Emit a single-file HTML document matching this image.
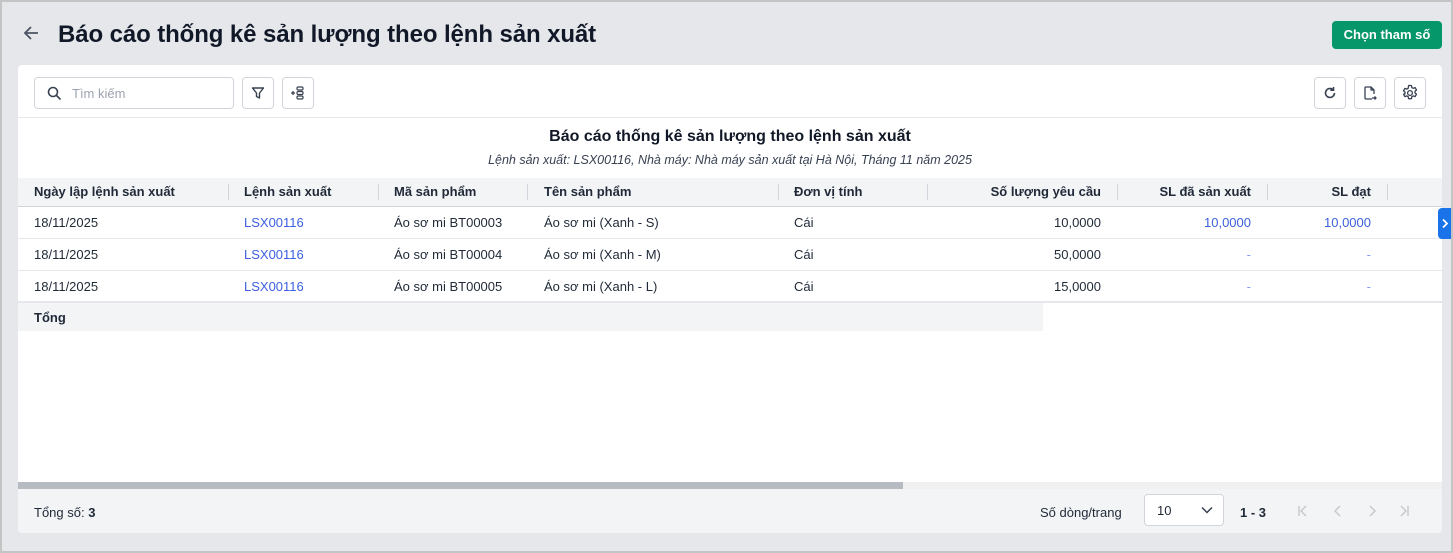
<!DOCTYPE html>
<html><head><meta charset="utf-8"><style>
*{box-sizing:border-box;margin:0;padding:0}
body{width:1453px;height:553px;overflow:hidden;background:#e5e7eb;font-family:"Liberation Sans",sans-serif;color:#1f2937;position:relative;font-size:13px}
.frame{position:absolute;left:0;top:0;width:1453px;height:553px;border:2px solid #c4c4c4}
.a{position:absolute}
.card{position:absolute;left:18px;top:65px;width:1424px;height:468px;background:#fff;border-radius:4px;overflow:hidden}
.btn{position:absolute;width:32px;height:32px;border:1px solid #d1d5db;border-radius:4px;background:#fff;display:flex;align-items:center;justify-content:center}
.row{position:absolute;left:0;width:1424px;height:32px;border-bottom:1px solid #e5e7eb}
.c{position:absolute;top:0;line-height:31px;white-space:nowrap}
.r{text-align:right}
.lnk{color:#3b5fe0}
.hd{font-weight:bold;color:#1f2937}
.sep{position:absolute;top:6px;width:1px;height:16px;background:#d1d5db}
</style></head><body>
<svg class="a" style="left:22px;top:24px" width="18" height="18" viewBox="0 0 18 18"><path d="M16 9H3M9 3L3 9l6 6" stroke="#4b5563" stroke-width="1.8" fill="none"/></svg>
<div class="a" style="left:58px;top:20px;font-size:24px;font-weight:bold;color:#111827;line-height:30px;letter-spacing:-0.1px">Báo cáo thống kê sản lượng theo lệnh sản xuất</div>
<div class="a" style="left:1332px;top:21px;width:110px;height:28px;background:#059669;border-radius:4px;color:#fff;font-weight:bold;font-size:13px;line-height:28px;text-align:center">Chọn tham số</div>

<div class="card">
 <div class="a" style="left:16px;top:12px;width:200px;height:32px;border:1px solid #d1d5db;border-radius:4px">
  <svg class="a" style="left:12px;top:8px" width="15" height="15" viewBox="0 0 15 15"><circle cx="6" cy="6" r="4.5" stroke="#374151" stroke-width="1.6" fill="none"/><path d="M9.5 9.5L13.5 13.5" stroke="#374151" stroke-width="1.6"/></svg>
  <span class="a" style="left:37px;top:8px;color:#9ca3af;font-size:13px">Tìm kiếm</span>
 </div>
 <div class="btn" style="left:224px;top:12px"><svg width="14" height="14" viewBox="0 0 14 14"><path d="M1.5 2h11L8.5 7v5l-3-1.5V7z" stroke="#374151" stroke-width="1.4" fill="none" stroke-linejoin="round"/></svg></div>
 <div class="btn" style="left:264px;top:12px"><svg width="16" height="16" viewBox="0 0 16 16"><path d="M1 8h4M3 6v4" stroke="#374151" stroke-width="1.3"/><rect x="7" y="2" width="6" height="3" rx="1.2" stroke="#374151" stroke-width="1.2" fill="none"/><rect x="7" y="6.5" width="6" height="3" rx="1.2" stroke="#374151" stroke-width="1.2" fill="none"/><rect x="7" y="11" width="6" height="3" rx="1.2" stroke="#374151" stroke-width="1.2" fill="none"/></svg></div>
 <div class="btn" style="left:1296px;top:12px"><svg width="14" height="14" viewBox="0 0 14 14"><path d="M11.5 7A4.5 4.5 0 1 1 10 3.6" stroke="#374151" stroke-width="1.6" fill="none"/><path d="M10.5 1v3.2H7.3" stroke="#374151" stroke-width="1.6" fill="none"/></svg></div>
 <div class="btn" style="left:1336px;top:12px"><svg width="16" height="16" viewBox="0 0 16 16"><path d="M10 14H4a1 1 0 0 1-1-1V3a1 1 0 0 1 1-1h5l3 3v4M9 2v3h3M10 13h4M12.5 11.5L14 13l-1.5 1.5" stroke="#374151" stroke-width="1.3" fill="none" stroke-linejoin="round"/></svg></div>
 <div class="btn" style="left:1376px;top:12px"><svg width="18" height="18" viewBox="0 0 18 18"><path d="M7.6 1.5h2.8l.4 2 1.4.8 1.9-.7 1.4 2.4-1.5 1.3v1.6l1.5 1.3-1.4 2.4-1.9-.7-1.4.8-.4 2H7.6l-.4-2-1.4-.8-1.9.7-1.4-2.4L4 9.7V8.1L2.5 6.8l1.4-2.4 1.9.7 1.4-.8z" stroke="#374151" stroke-width="1.3" fill="none" stroke-linejoin="round"/><circle cx="9" cy="9" r="2.4" stroke="#374151" stroke-width="1.3" fill="none"/></svg></div>
 <div class="a" style="left:0;top:52px;width:1424px;height:1px;background:#e5e7eb"></div>
 <div class="a" style="left:0;top:63px;width:1424px;text-align:center;font-size:16px;font-weight:bold;color:#111827">Báo cáo thống kê sản lượng theo lệnh sản xuất</div>
 <div class="a" style="left:0;top:88px;width:1424px;text-align:center;font-size:12.5px;font-style:italic;color:#374151">Lệnh sản xuất: LSX00116, Nhà máy: Nhà máy sản xuất tại Hà Nội, Tháng 11 năm 2025</div>

 <div class="row" style="top:113px;height:29px;background:#f3f4f6;border-bottom:1px solid #d1d5db">
  <span class="c hd" style="left:16px;line-height:28px">Ngày lập lệnh sản xuất</span>
  <span class="c hd" style="left:226px;line-height:28px">Lệnh sản xuất</span>
  <span class="c hd" style="left:376px;line-height:28px">Mã sản phẩm</span>
  <span class="c hd" style="left:526px;line-height:28px">Tên sản phẩm</span>
  <span class="c hd" style="left:776px;line-height:28px">Đơn vị tính</span>
  <span class="c hd r" style="left:900px;width:183px;line-height:28px">Số lượng yêu cầu</span>
  <span class="c hd r" style="left:1100px;width:133px;line-height:28px">SL đã sản xuất</span>
  <span class="c hd r" style="left:1250px;width:103px;line-height:28px">SL đạt</span>
  <div class="sep" style="left:210px"></div><div class="sep" style="left:360px"></div><div class="sep" style="left:509px"></div><div class="sep" style="left:760px"></div><div class="sep" style="left:909px"></div><div class="sep" style="left:1099px"></div><div class="sep" style="left:1249px"></div><div class="sep" style="left:1369px"></div>
 </div>
 <div class="row" style="top:142px"><span class="c" style="left:16px">18/11/2025</span><span class="c lnk" style="left:226px">LSX00116</span><span class="c" style="left:376px">Áo sơ mi BT00003</span><span class="c" style="left:526px">Áo sơ mi (Xanh - S)</span><span class="c" style="left:776px">Cái</span><span class="c r" style="left:900px;width:183px">10,0000</span><span class="c r lnk" style="left:1100px;width:133px">10,0000</span><span class="c r lnk" style="left:1250px;width:103px">10,0000</span></div>
 <div class="row" style="top:174px"><span class="c" style="left:16px">18/11/2025</span><span class="c lnk" style="left:226px">LSX00116</span><span class="c" style="left:376px">Áo sơ mi BT00004</span><span class="c" style="left:526px">Áo sơ mi (Xanh - M)</span><span class="c" style="left:776px">Cái</span><span class="c r" style="left:900px;width:183px">50,0000</span><span class="c r lnk" style="left:1100px;width:133px;color:#8b9cf0">-</span><span class="c r lnk" style="left:1250px;width:103px;color:#8b9cf0">-</span></div>
 <div class="row" style="top:206px;border-bottom:2px solid #e5e7eb"><span class="c" style="left:16px">18/11/2025</span><span class="c lnk" style="left:226px">LSX00116</span><span class="c" style="left:376px">Áo sơ mi BT00005</span><span class="c" style="left:526px">Áo sơ mi (Xanh - L)</span><span class="c" style="left:776px">Cái</span><span class="c r" style="left:900px;width:183px">15,0000</span><span class="c r lnk" style="left:1100px;width:133px;color:#8b9cf0">-</span><span class="c r lnk" style="left:1250px;width:103px;color:#8b9cf0">-</span></div>
 <div class="a" style="left:0;top:238px;width:1025px;height:28px;background:#f3f4f6"><span class="c hd" style="left:16px;line-height:30px">Tổng</span></div>

 <div class="a" style="left:0;top:417px;width:1424px;height:7px;background:#f0f0f0"></div>
 <div class="a" style="left:0;top:417px;width:885px;height:7px;background:#b6bac1"></div>
 <div class="a" style="left:0;top:424px;width:1424px;height:44px;background:#f3f4f6">
  <span class="a" style="left:16px;top:16px">Tổng số: <b>3</b></span>
  <span class="a" style="left:1022px;top:16px">Số dòng/trang</span>
  <div class="a" style="left:1126px;top:5px;width:80px;height:32px;background:#fff;border:1px solid #d1d5db;border-radius:4px"><span class="a" style="left:12px;top:8px">10</span><svg class="a" style="left:56px;top:11px" width="12" height="8" viewBox="0 0 12 8"><path d="M1 1.5l5 5 5-5" stroke="#374151" stroke-width="1.5" fill="none"/></svg></div>
  <span class="a" style="left:1222px;top:16px;font-weight:bold">1 - 3</span>
  <svg class="a" style="left:1276px;top:15px" width="120" height="14" viewBox="0 0 120 14"><g stroke="#c4c7cc" stroke-width="1.4" fill="none"><path d="M5 2v10M12 2L7 7l5 5"/><path d="M46 2l-5 5 5 5"/><path d="M76 2l5 5-5 5"/><path d="M107 2l5 5-5 5M114 2v10"/></g></svg>
 </div>
</div>
<div class="a" style="left:1438px;top:208px;width:14px;height:31px;background:#1a73e8;border-radius:4px 0 0 4px"><svg class="a" style="left:3px;top:10px" width="8" height="11" viewBox="0 0 8 11"><path d="M2 1.5l4 4-4 4" stroke="#fff" stroke-width="1.8" fill="none"/></svg></div>
<div class="frame"></div>
</body></html>
